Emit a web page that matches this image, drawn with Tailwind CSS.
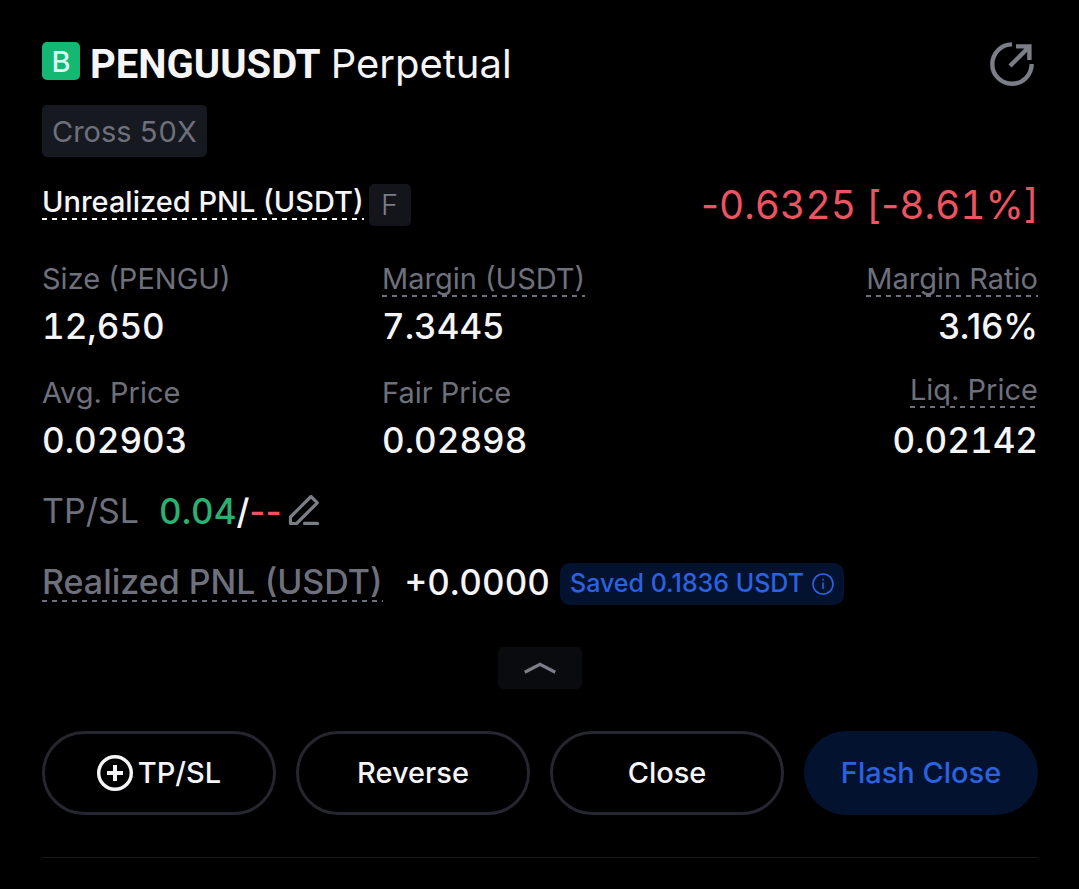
<!DOCTYPE html>
<html lang="en">
<head>
<meta charset="utf-8">
<meta name="viewport" content="width=device-width, initial-scale=1">
<title>PENGUUSDT Perpetual</title>
<script src="https://cdn.jsdelivr.net/npm/@tailwindcss/browser@4"></script>
</head>
<body class="min-h-screen bg-black font-['Inter','Liberation_Sans',sans-serif] text-[#f5f5f7]">
<main class="flex flex-col pt-[42px] pr-[41px] pl-[42px]">
  <header class="flex h-11 items-start justify-between">
    <div class="flex items-start">
      <span class="flex size-[38px] items-center justify-center rounded-[5px] bg-[#15b873] text-[29px] leading-none font-medium text-[#d9fff0]">B</span>
      <h1 class="ml-[10px] flex items-baseline gap-[10px] leading-[44px] whitespace-nowrap"><span class="font-['Roboto',sans-serif] text-[40px] font-bold">PENGUUSDT</span><span class="text-[40px] font-normal">Perpetual</span></h1>
    </div>
    <button type="button" aria-label="Share position" class="mr-1 size-11 text-[#7b7d87]">
      <svg viewBox="0 0 44 44" class="size-11" fill="none" stroke="currentColor" stroke-width="4.4"><path d="M22 2.4A19.7 19.7 0 1 0 41.7 22"/><path d="M20 24L39 5M26 4.4H39.4V18"/></svg>
    </button>
  </header>

  <div class="mt-[19px] flex"><span class="h-[52px] rounded-[5px] bg-[#171920] px-[10px] text-[29px] leading-[54px] text-[#6e717c] tabular-nums">Cross 50X</span></div>

  <section class="mt-[27px] flex h-[42px] items-start justify-between">
    <div class="flex items-start gap-[5px]">
      <span class="h-9 bg-[linear-gradient(90deg,#f5f5f7_50%,transparent_50%)] bg-[length:10px_2px] bg-bottom-left bg-repeat-x text-[29px] leading-9 font-medium">Unrealized PNL (USDT)</span>
      <span class="flex size-[42px] items-center justify-center rounded-[5px] bg-[#14151b] text-[29px] leading-[44px] font-light text-[#7b7d87]">F</span>
    </div>
    <span class="text-[39px] leading-[42px] text-[#ee5361]">-<span class="tabular-nums">0.6325</span> [-<span class="tabular-nums">8.61</span>%]</span>
  </section>

  <dl class="mt-[35px] grid grid-cols-[340px_1fr_1fr] gap-y-6">
    <div class="flex flex-col items-start gap-[7px]"><dt class="h-9 text-[29px] leading-9 text-[#6e717c]">Size (PENGU)</dt><dd class="text-[35px] leading-[44px] font-medium tabular-nums">12,650</dd></div>
    <div class="flex flex-col items-start gap-[7px]"><dt class="h-9 bg-[linear-gradient(90deg,#6e717c_50%,transparent_50%)] bg-[length:10px_2px] bg-bottom-left bg-repeat-x text-[29px] leading-9 text-[#6e717c]">Margin (USDT)</dt><dd class="text-[35px] leading-[44px] font-medium tabular-nums">7.3445</dd></div>
    <div class="flex flex-col items-end gap-[7px]"><dt class="h-9 bg-[linear-gradient(90deg,#6e717c_50%,transparent_50%)] bg-[length:10px_2px] bg-bottom-left bg-repeat-x text-[29px] leading-9 text-[#6e717c]">Margin Ratio</dt><dd class="text-[35px] leading-[44px] font-medium">3.16%</dd></div>
    <div class="flex flex-col items-start justify-end gap-[7px]"><dt class="h-9 text-[29px] leading-9 text-[#6e717c]">Avg. Price</dt><dd class="text-[35px] leading-[44px] font-medium tabular-nums">0.02903</dd></div>
    <div class="flex flex-col items-start justify-end gap-[7px]"><dt class="h-9 text-[29px] leading-9 text-[#6e717c]">Fair Price</dt><dd class="text-[35px] leading-[44px] font-medium tabular-nums">0.02898</dd></div>
    <div class="flex flex-col items-end gap-[10px]"><dt class="h-9 bg-[linear-gradient(90deg,#6e717c_50%,transparent_50%)] bg-[length:10px_2px] bg-bottom-left bg-repeat-x text-[29px] leading-9 text-[#6e717c]">Liq. Price</dt><dd class="text-[35px] leading-[44px] font-medium tabular-nums">0.02142</dd></div>
  </dl>

  <section class="mt-[27px] flex h-11 items-center text-[35px] leading-[44px]">
    <span class="text-[34px] text-[#6e717c]">TP/SL</span>
    <span class="ml-5 font-medium"><span class="text-[#29b172] tabular-nums">0.04</span>/<span class="text-[#ee5361]">--</span></span>
    <button type="button" aria-label="Edit TP/SL" class="ml-[6px] text-[#7b7d87]">
      <svg viewBox="0 0 32 32" class="size-8" fill="none" stroke="currentColor" stroke-width="3.2" stroke-linejoin="round"><path d="M2.5 28.5V22L23 1.5L29.3 7.8L8.6 28.5Z"/><path d="M16.5 28.4H29.5" stroke-linecap="round"/></svg>
    </button>
  </section>

  <section class="mt-[29px] flex h-11 items-start">
    <span class="h-10 bg-[linear-gradient(90deg,#6e717c_50%,transparent_50%)] bg-[length:10px_2px] bg-bottom-left bg-repeat-x text-[34px] leading-10 font-medium text-[#6e717c]">Realized PNL (USDT)</span>
    <span class="ml-[22px] text-[35px] leading-10 font-medium tabular-nums">+0.0000</span>
    <button type="button" class="ml-[10px] flex h-[42px] items-center gap-2 self-center rounded-[10px] bg-[#03122e] px-[10px] text-[25px] font-medium text-[#2b62e0]">Saved 0.1836 USDT
      <svg viewBox="0 0 22 22" class="size-[22px]" fill="none" stroke="currentColor" stroke-width="1.6"><circle cx="11" cy="11" r="10"/><path d="M11 9.5V16M11 5.8V7.6"/></svg>
    </button>
  </section>

  <button type="button" aria-label="Collapse details" class="mt-[41px] flex h-[42px] w-[84px] items-center justify-center self-center rounded-[5px] bg-[#0a0b0f] text-[#7b7d87]">
    <svg viewBox="0 0 32 12" class="h-3 w-8" fill="none" stroke="currentColor" stroke-width="3.2"><path d="M.7 10.2L16 2.4L31.3 10.2"/></svg>
  </button>

  <div class="mt-[42px] grid grid-cols-4 gap-5 text-[29px] font-medium">
    <button type="button" class="flex h-[84px] items-center justify-center gap-[5px] rounded-full border-3 border-[#25262e]">
      <svg viewBox="0 0 36 36" class="size-9" fill="none" stroke="currentColor"><circle cx="18" cy="18" r="16.3" stroke-width="3.4"/><path d="M10 18H26M18 10V26" stroke-width="4"/></svg>TP/SL</button>
    <button type="button" class="h-[84px] rounded-full border-3 border-[#25262e]">Reverse</button>
    <button type="button" class="h-[84px] rounded-full border-3 border-[#25262e]">Close</button>
    <button type="button" class="h-[84px] rounded-full bg-[#03122e] text-[#2b62e0]">Flash Close</button>
  </div>
  <hr class="mt-[42px] border-[#18191d]">
</main>
</body>
</html>
